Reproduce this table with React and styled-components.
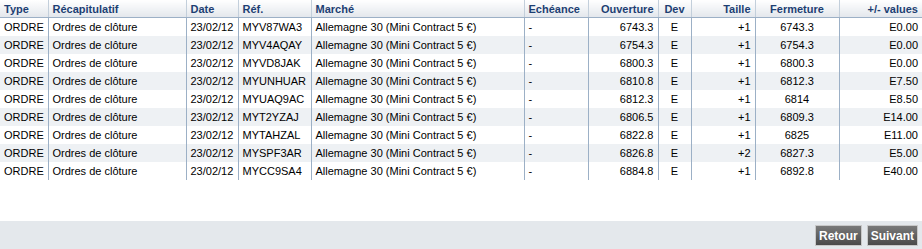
import React from "react";
import styled, { createGlobalStyle } from "styled-components";

const GlobalStyle = createGlobalStyle`
  html, body {
    margin: 0;
    padding: 0;
    background: #fff;
    font-family: "Liberation Sans", Arial, sans-serif;
  }
`;

const Wrapper = styled.div`
  width: 922px;
  height: 249px;
  display: flex;
  flex-direction: column;
`;

const Table = styled.table`
  width: 922px;
  table-layout: fixed;
  border-collapse: collapse;
  font-size: 11px;
  color: #000;
`;

const Th = styled.th`
  height: 17px;
  padding: 0 4px;
  font-weight: bold;
  color: #1d3f73;
  text-align: ${p => p.$align || "left"};
  background: linear-gradient(#ffffff, #e3e7ec);
  border-bottom: 1px solid #9cb0c6;
  border-left: 1px solid #c3cfdb;
  white-space: nowrap;
  &:first-child {
    border-left: none;
  }
`;

const Tr = styled.tr`
  background: ${p => (p.$alt ? "#eef1f4" : "#fff")};
`;

const Td = styled.td`
  height: 18px;
  padding: 0 4px;
  text-align: ${p => p.$align || "left"};
  border-left: 1px solid #9cb0c6;
  white-space: nowrap;
  &:first-child {
    border-left: none;
  }
`;

const Spacer = styled.div`
  flex: 1;
`;

const Footer = styled.div`
  height: 28px;
  background: #e4e8ec;
  display: flex;
  justify-content: flex-end;
  align-items: flex-end;
  gap: 5px;
  padding: 0 4px 3px 0;
  box-sizing: border-box;
`;

const Button = styled.button`
  height: 21px;
  padding: 0 3px;
  font-family: "Liberation Sans", Arial, sans-serif;
  font-size: 12px;
  font-weight: bold;
  color: #fff;
  background: linear-gradient(#7a7a7a, #4a4a4a);
  border: 1px solid #c8c8c8;
  cursor: pointer;
`;

const columns = [
  { key: "type", label: "Type", width: 48 },
  { key: "recap", label: "Récapitulatif", width: 138 },
  { key: "date", label: "Date", width: 52 },
  { key: "ref", label: "Réf.", width: 73 },
  { key: "marche", label: "Marché", width: 213 },
  { key: "echeance", label: "Echéance", width: 64 },
  { key: "ouverture", label: "Ouverture", width: 70, align: "right" },
  { key: "dev", label: "Dev", width: 33, align: "center" },
  { key: "taille", label: "Taille", width: 64, align: "right" },
  { key: "fermeture", label: "Fermeture", width: 84, align: "center" },
  { key: "values", label: "+/- values", width: 83, align: "right" },
];

const raw = [
  ["MYV87WA3", "6743.3", "+1", "6743.3", "E0.00"],
  ["MYV4AQAY", "6754.3", "+1", "6754.3", "E0.00"],
  ["MYVD8JAK", "6800.3", "+1", "6800.3", "E0.00"],
  ["MYUNHUAR", "6810.8", "+1", "6812.3", "E7.50"],
  ["MYUAQ9AC", "6812.3", "+1", "6814", "E8.50"],
  ["MYT2YZAJ", "6806.5", "+1", "6809.3", "E14.00"],
  ["MYTAHZAL", "6822.8", "+1", "6825", "E11.00"],
  ["MYSPF3AR", "6826.8", "+2", "6827.3", "E5.00"],
  ["MYCC9SA4", "6884.8", "+1", "6892.8", "E40.00"],
];

const rows = raw.map(([ref, ouverture, taille, fermeture, values]) => ({
  type: "ORDRE",
  recap: "Ordres de clôture",
  date: "23/02/12",
  ref,
  marche: "Allemagne 30 (Mini Contract 5 €)",
  echeance: "-",
  ouverture,
  dev: "E",
  taille,
  fermeture,
  values,
}));

export default function App() {
  return (
    <Wrapper>
      <GlobalStyle />
      <Table>
        <colgroup>
          {columns.map(c => (
            <col key={c.key} style={{ width: c.width }} />
          ))}
        </colgroup>
        <thead>
          <tr>
            {columns.map(c => (
              <Th key={c.key} $align={c.align}>
                {c.label}
              </Th>
            ))}
          </tr>
        </thead>
        <tbody>
          {rows.map((r, i) => (
            <Tr key={r.ref} $alt={i % 2 === 1}>
              {columns.map(c => (
                <Td key={c.key} $align={c.align}>
                  {r[c.key]}
                </Td>
              ))}
            </Tr>
          ))}
        </tbody>
      </Table>
      <Spacer />
      <Footer>
        <Button>Retour</Button>
        <Button>Suivant</Button>
      </Footer>
    </Wrapper>
  );
}
